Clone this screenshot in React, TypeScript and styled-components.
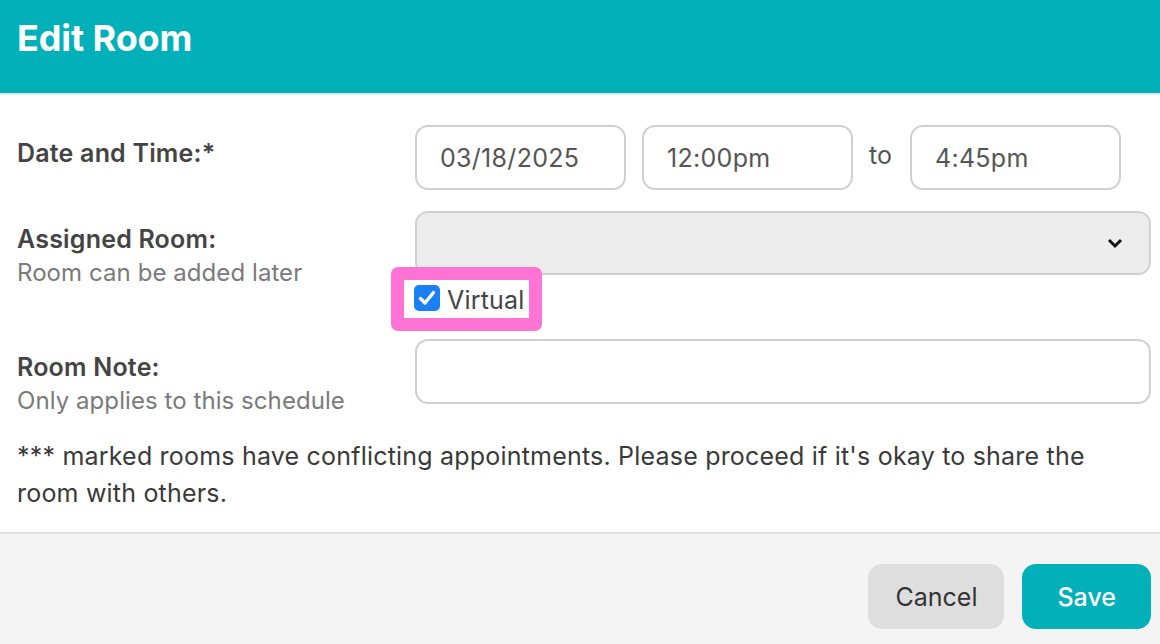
import React from "react";
import styled, { createGlobalStyle } from "styled-components";

const GlobalStyle = createGlobalStyle`
  html, body { margin: 0; padding: 0; background: #ffffff; }
  body { font-family: Inter, "Noto Sans", sans-serif; color: #444; }
  * { box-sizing: border-box; }
`;

const TEAL = "#02b0b9";

const Dialog = styled.div`
  width: 1160px;
  height: 644px;
  display: flex;
  flex-direction: column;
  background: #fff;
  overflow: hidden;
`;

const Header = styled.header`
  height: 95px;
  flex: none;
  background: ${TEAL};
  border-bottom: 2px solid #e4e4e4;
  display: flex;
  align-items: center;
  padding: 0 17px 18px;
`;

const Title = styled.h1`
  margin: 0;
  font-size: 36px;
  font-weight: 700;
  color: #fff;
  letter-spacing: -0.1px;
`;

const Body = styled.div`
  flex: 1;
  display: flex;
  flex-direction: column;
  gap: 21px;
  padding: 30px 9px 20px 17px;
`;

const Row = styled.div`
  display: grid;
  grid-template-columns: 398px 1fr;
  align-items: start;
`;

const LabelCol = styled.div`
  display: flex;
  flex-direction: column;
  padding-top: 12px;
`;

const Label = styled.div`
  font-size: 25px;
  line-height: 33px;
  font-weight: 600;
  color: #444;
  letter-spacing: 0.2px;
`;

const Sub = styled.div`
  font-size: 24px;
  line-height: 33px;
  color: #7a7a7a;
  letter-spacing: 0.07px;
`;

const Field = styled.div`
  display: flex;
  flex-direction: column;
  align-items: flex-start;
`;

const InlineGroup = styled.div`
  display: flex;
  align-items: center;
  gap: 16px;
`;

const TextInput = styled.input<{ $w?: number }>`
  width: ${(p) => (p.$w ? `${p.$w}px` : "100%")};
  height: 65px;
  border: 2px solid #d0d0d0;
  border-radius: 13px;
  padding: 0 23px;
  font-family: Inter, "Noto Sans", sans-serif;
  font-size: 25px;
  letter-spacing: 0.3px;
  color: #555;
  background: #fff;
  outline: none;
`;

const To = styled.span`
  font-size: 25px;
  color: #555;
  margin: 0 2px 6px 0;
`;

const SelectBox = styled.div`
  width: 100%;
  height: 64px;
  border: 2px solid #d0d0d0;
  border-radius: 13px;
  background: #ececec;
  display: flex;
  align-items: center;
  justify-content: flex-end;
  padding-right: 26px;
`;

const CheckLabel = styled.label`
  position: relative;
  display: inline-flex;
  align-items: center;
  gap: 7px;
  margin: 6px 0 0 -11px;
  height: 37px;
  padding: 0 3px 0 10px;
  background: #fff;
  font-size: 25px;
  letter-spacing: 0.2px;
  color: #444;
  &::before {
    content: "";
    position: absolute;
    inset: -14px -14px -13px -13px;
    border: 13px solid #ff73d5;
    border-radius: 7px;
    pointer-events: none;
  }
`;

const CheckBox = styled.span`
  width: 26px;
  height: 26px;
  border-radius: 5px;
  background: #1b7ff6;
  display: inline-flex;
  align-items: center;
  justify-content: center;
  margin-top: -3px;
`;

const Note = styled.p`
  margin: 0;
  font-size: 25px;
  line-height: 37px;
  letter-spacing: 0.2px;
  color: #3a3a3a;
  padding-right: 40px;
`;

const Footer = styled.footer`
  flex: none;
  background: #f4f4f4;
  border-top: 2px solid #e0e0e0;
  display: flex;
  justify-content: flex-end;
  gap: 18px;
  padding: 30px 9px 15px;
`;

const Button = styled.button<{ $primary?: boolean }>`
  height: 65px;
  border: none;
  border-radius: 14px;
  font-family: Inter, "Noto Sans", sans-serif;
  font-size: 25px;
  padding: 0 ${(p) => (p.$primary ? "35px" : "27px")};
  background: ${(p) => (p.$primary ? TEAL : "#dedede")};
  color: ${(p) => (p.$primary ? "#fff" : "#333")};
  font-weight: ${(p) => (p.$primary ? 500 : 400)};
  cursor: pointer;
`;

export default function App() {
  return (
    <>
      <GlobalStyle />
      <Dialog>
        <Header>
          <Title>Edit Room</Title>
        </Header>
        <Body>
          <Row>
            <LabelCol>
              <Label>Date and Time:*</Label>
            </LabelCol>
            <InlineGroup>
              <TextInput $w={211} defaultValue="03/18/2025" />
              <TextInput $w={211} defaultValue="12:00pm" />
              <To>to</To>
              <TextInput $w={211} defaultValue="4:45pm" />
            </InlineGroup>
          </Row>
          <Row>
            <LabelCol>
              <Label>Assigned Room:</Label>
              <Sub>Room can be added later</Sub>
            </LabelCol>
            <Field>
              <SelectBox>
                <svg width="16" height="12" viewBox="0 0 16 12">
                  <path d="M2 3 L8 9 L14 3" fill="none" stroke="#111" strokeWidth="3" />
                </svg>
              </SelectBox>
              <CheckLabel>
                <CheckBox>
                  <svg width="18" height="16" viewBox="0 0 18 16">
                    <path d="M2.5 8.5 L7 13 L15.5 2.5" fill="none" stroke="#fff" strokeWidth="3.4" strokeLinecap="round" strokeLinejoin="round" />
                  </svg>
                </CheckBox>
                Virtual
              </CheckLabel>
            </Field>
          </Row>
          <Row>
            <LabelCol>
              <Label>Room Note:</Label>
              <Sub>Only applies to this schedule</Sub>
            </LabelCol>
            <Field>
              <TextInput />
            </Field>
          </Row>
          <Note>
            *** marked rooms have conflicting appointments. Please proceed if it's okay to share the room with others.
          </Note>
        </Body>
        <Footer>
          <Button>Cancel</Button>
          <Button $primary>Save</Button>
        </Footer>
      </Dialog>
    </>
  );
}
